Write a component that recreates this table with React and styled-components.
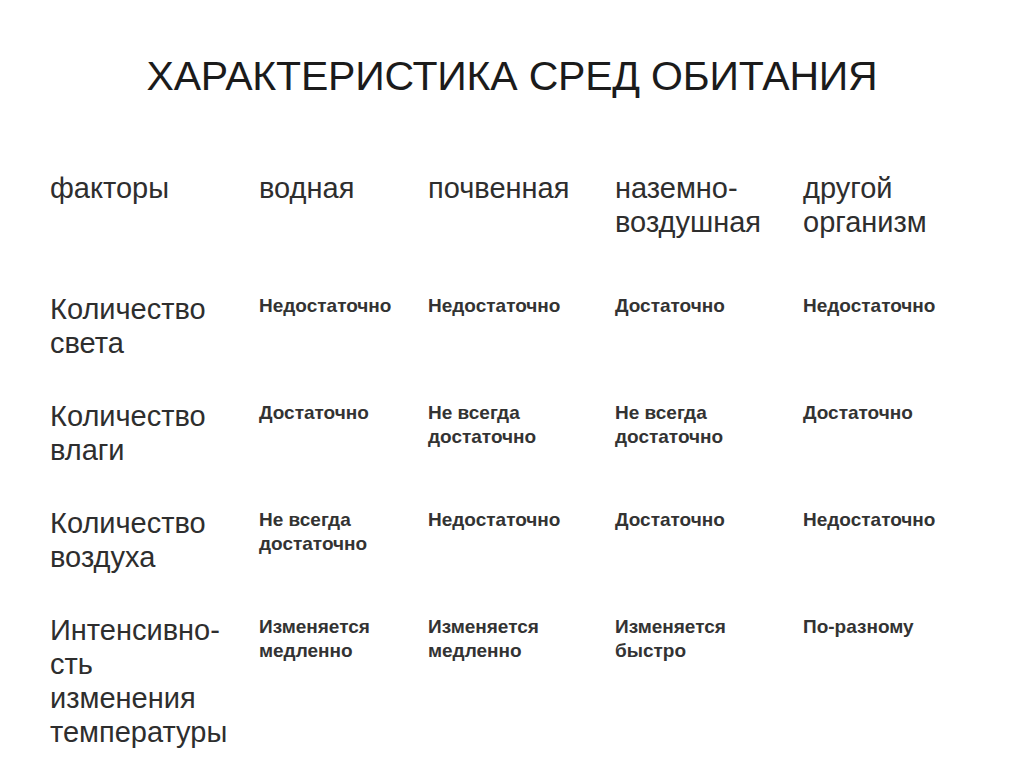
import React from "react";
import styled, { createGlobalStyle } from "styled-components";

const GlobalStyle = createGlobalStyle`
  html, body {
    margin: 0;
    padding: 0;
    background: #fff;
  }
  body {
    font-family: "Liberation Sans", Arial, sans-serif;
    color: #2b2b2b;
  }
`;

const Slide = styled.div`
  width: 1024px;
  height: 767px;
  overflow: hidden;
  background: #fff;
  display: flex;
  flex-direction: column;
`;

const Title = styled.h1`
  margin: 53px 0 0 0;
  font-size: 41px;
  line-height: 46px;
  font-weight: 400;
  color: #1b1b1b;
  text-align: center;
  letter-spacing: -0.2px;
`;

const Table = styled.div`
  margin-top: 72px;
  padding-left: 50px;
  display: flex;
  flex-direction: column;
`;

const Row = styled.div`
  display: grid;
  grid-template-columns: 209px 169px 187px 188px 1fr;
  align-items: start;
  min-height: ${(p) => p.$height}px;
`;

const HeadCell = styled.div`
  font-size: 29px;
  line-height: 34px;
  color: #2e2e2e;
`;

const Factor = styled.div`
  font-size: 29px;
  line-height: 34px;
  color: #2e2e2e;
`;

const Value = styled.div`
  font-size: 19px;
  line-height: 24px;
  font-weight: 700;
  color: #333;
  margin-top: 2px;
`;

const headers = ["факторы", "водная", "почвенная", ["наземно-", "воздушная"], ["другой", "организм"]];

const rows = [
  {
    factor: ["Количество", "света"],
    values: [["Недостаточно"], ["Недостаточно"], ["Достаточно"], ["Недостаточно"]],
  },
  {
    factor: ["Количество", "влаги"],
    values: [["Достаточно"], ["Не всегда", "достаточно"], ["Не всегда", "достаточно"], ["Достаточно"]],
  },
  {
    factor: ["Количество", "воздуха"],
    values: [["Не всегда", "достаточно"], ["Недостаточно"], ["Достаточно"], ["Недостаточно"]],
  },
  {
    factor: ["Интенсивно-", "сть", "изменения", "температуры"],
    values: [["Изменяется", "медленно"], ["Изменяется", "медленно"], ["Изменяется", "быстро"], ["По-разному"]],
  },
];

const Lines = ({ lines }) =>
  [].concat(lines).map((l, i) => (
    <React.Fragment key={i}>
      {i > 0 && <br />}
      {l}
    </React.Fragment>
  ));

export default function App() {
  return (
    <>
      <GlobalStyle />
      <Slide>
        <Title>ХАРАКТЕРИСТИКА СРЕД ОБИТАНИЯ</Title>
        <Table>
          <Row $height={121}>
            {headers.map((h, i) => (
              <HeadCell key={i}>
                <Lines lines={h} />
              </HeadCell>
            ))}
          </Row>
          {rows.map((r, i) => (
            <Row key={i} $height={107}>
              <Factor>
                <Lines lines={r.factor} />
              </Factor>
              {r.values.map((v, j) => (
                <Value key={j}>
                  <Lines lines={v} />
                </Value>
              ))}
            </Row>
          ))}
        </Table>
      </Slide>
    </>
  );
}
